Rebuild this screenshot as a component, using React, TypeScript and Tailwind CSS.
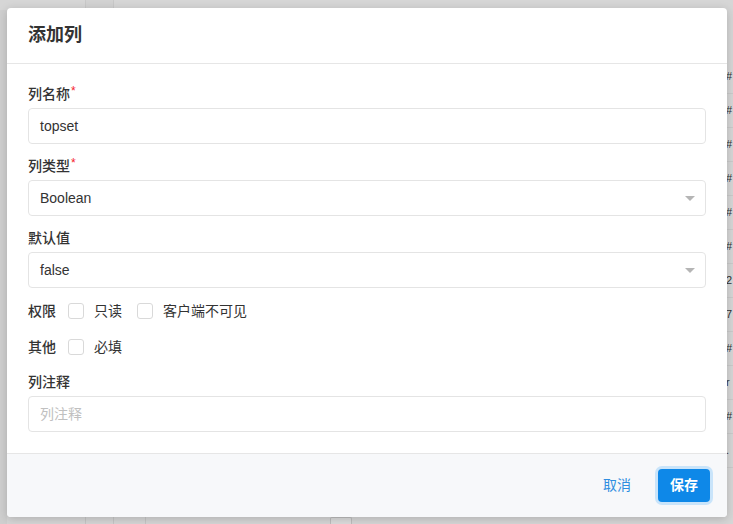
const font = "font-['Liberation_Sans','Noto_Sans_CJK_SC',sans-serif]";

function Label({ text, required }: { text: string; required?: boolean }) {
  return (
    <div className="h-5 mb-1 flex items-center text-[14px] text-[#333] leading-5 font-medium">
      <span>{text}</span>
      {required && <span className="text-[#f5222d] text-[12px] leading-none self-start mt-[1px] ml-[1px]">*</span>}
    </div>
  );
}

function Select({ value }: { value: string }) {
  return (
    <div className="h-9 border border-[#e4e4e4] rounded-[4px] flex items-center justify-between px-[11px] text-[14px] text-[#333]">
      <span>{value}</span>
      <span className="w-0 h-0 border-l-[5px] border-r-[5px] border-t-[5px] border-l-transparent border-r-transparent border-t-[#b5b5b5] mr-[-1px]" />
    </div>
  );
}

function Check({ text }: { text: string }) {
  return (
    <div className="flex items-center">
      <span className="w-4 h-4 border border-[#d9d9d9] rounded-[3px] bg-white" />
      <span className="ml-[10px] text-[14px] text-[#333]">{text}</span>
    </div>
  );
}

export default function App() {
  return (
    <div className={`w-[733px] h-[524px] bg-[#d6d6d6] overflow-hidden relative ${font}`}>
      {/* dimmed page behind */}
      <div className="absolute top-0 left-0 right-0 h-[8px] flex">
        <div className="w-[86px] border-r border-[#c8c8c8]" />
        <div className="w-[28px] border-r border-[#c8c8c8] bg-[#d2d2d2]" />
      </div>
      <div className="absolute left-0 top-[10px] w-[7px] bottom-0 bg-[#cfcfcf]" />
      <div className="absolute right-0 top-[60px] w-[6px] bottom-0 flex flex-col text-[11px] text-[#333] leading-none">
        {["#", "#", "#", "#", "#", "#", "2", "7", "#", "r", "#", "."].map((c, i) => (
          <div key={i} className="h-[34px] border-b border-[#cacaca] flex items-center -ml-[1px]">{c}</div>
        ))}
      </div>
      <div className="absolute bottom-0 left-[85px] right-0 h-[7px] flex">
        <div className="w-[28px] border-l border-[#c6c6c6]" />
        <div className="w-[32px] border-l border-[#c6c6c6]" />
        <div className="w-[185px] border-l border-[#c6c6c6]" />
        <div className="w-[22px] border border-b-0 border-[#bdbdbd] rounded-t-[2px] bg-[#dcdcdc]" />
      </div>

      <div className="absolute left-[7px] top-[8px] w-[720px] h-[509px] bg-white rounded-[4px] shadow-[0_2px_10px_rgba(0,0,0,0.18)] flex flex-col overflow-hidden">
        <div className="h-[56px] border-b border-[#e6e6e6] flex items-center px-[21px] shrink-0">
          <span className="text-[18px] font-bold text-[#333]">添加列</span>
        </div>
        <div className="flex-1 px-[21px] pt-5">
          <Label text="列名称" required />
          <div className="h-9 border border-[#e4e4e4] rounded-[4px] flex items-center px-[11px] text-[14px] text-[#333]">topset</div>
          <div className="mt-3">
            <Label text="列类型" required />
            <Select value="Boolean" />
          </div>
          <div className="mt-3">
            <Label text="默认值" />
            <Select value="false" />
          </div>
          <div className="mt-3 h-[22px] flex items-center text-[14px] text-[#333]">
            <span className="mr-[12px] font-medium">权限</span>
            <Check text="只读" />
            <div className="ml-[15px]"><Check text="客户端不可见" /></div>
          </div>
          <div className="mt-[14px] h-[22px] flex items-center text-[14px] text-[#333]">
            <span className="mr-[12px] font-medium">其他</span>
            <Check text="必填" />
          </div>
          <div className="mt-[14px]">
            <Label text="列注释" />
            <div className="h-9 border border-[#e4e4e4] rounded-[4px] flex items-center px-[11px] text-[14px] text-[#c0c0c0]">列注释</div>
          </div>
        </div>
        <div className="h-[64px] shrink-0 bg-[#f7f8fa] border-t border-[#e6e6e6] flex items-center justify-end pr-[17px]">
          <span className="text-[14px] text-[#2f8ee0] mr-[27px]">取消</span>
          <button className="h-[33px] w-[52px] rounded-[4px] bg-[#0e88e8] text-white text-[14px] font-bold ring-[3px] ring-[#c9e4fa]">保存</button>
        </div>
      </div>
    </div>
  );
}
